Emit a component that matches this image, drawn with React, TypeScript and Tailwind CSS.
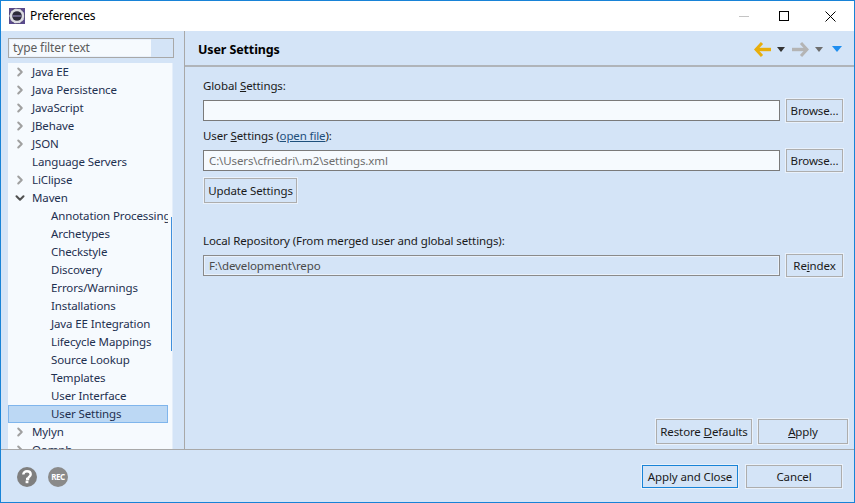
import { ChevronRight, ChevronDown } from "lucide-react";

const TREE = [
  { label: "Java EE", kind: "closed" },
  { label: "Java Persistence", kind: "closed" },
  { label: "JavaScript", kind: "closed" },
  { label: "JBehave", kind: "closed" },
  { label: "JSON", kind: "closed" },
  { label: "Language Servers", kind: "leaf" },
  { label: "LiClipse", kind: "closed" },
  { label: "Maven", kind: "open" },
  { label: "Annotation Processing", kind: "child" },
  { label: "Archetypes", kind: "child" },
  { label: "Checkstyle", kind: "child" },
  { label: "Discovery", kind: "child" },
  { label: "Errors/Warnings", kind: "child" },
  { label: "Installations", kind: "child" },
  { label: "Java EE Integration", kind: "child" },
  { label: "Lifecycle Mappings", kind: "child" },
  { label: "Source Lookup", kind: "child" },
  { label: "Templates", kind: "child" },
  { label: "User Interface", kind: "child" },
  { label: "User Settings", kind: "selected" },
  { label: "Mylyn", kind: "closed" },
  { label: "Oomph", kind: "closed" },
];

function Btn({ className, children }: { className: string; children: React.ReactNode }) {
  return (
    <button
      type="button"
      className={`block text-center border border-[#adadad] shadow-[0_0_0_1px_#e9f1fb] bg-[#d4e4f7] text-[#1a1a1a] ${className}`}
    >
      {children}
    </button>
  );
}

function TreeRow({ label, kind }: { label: string; kind: string }) {
  const pad = kind === "selected" ? "pl-[42px]" : kind === "child" ? "pl-[43px]" : "pl-[24px]";
  return (
    <div
      className={`h-[18px] flex items-center shrink-0 w-[160px] overflow-hidden whitespace-nowrap text-[#1e3050] ${
        kind === "selected" ? "bg-[#bcd8f4] border border-[#7fb5ec]" : ""
      } ${pad}`}
    >
      {kind === "closed" && <ChevronRight className="w-[14px] h-[14px] -ml-[19px] mr-[5px] shrink-0 text-[#a0a0a0]" strokeWidth={3.5} />}
      {kind === "open" && <ChevronDown className="w-[14px] h-[14px] -ml-[19px] mr-[5px] shrink-0 text-[#505050]" strokeWidth={3.5} />}
      {label}
    </div>
  );
}

export default function App() {
  return (
    <div
      className="w-[855px] h-[503px] flex flex-col border border-[#1883d7] bg-[#d4e4f7] text-[11.5px] text-[#1a1a1a] overflow-hidden"
      style={{ fontFamily: '"Noto Sans", sans-serif', letterSpacing: "-0.12px" }}
    >
      {/* title bar */}
      <div className="h-[30px] shrink-0 bg-white flex items-center">
        <svg className="ml-[8px] w-[16px] h-[16px]" viewBox="0 0 16 16">
          <rect width="16" height="16" fill="#5a4a8c" />
          <circle cx="8" cy="8" r="7.6" fill="#dcdce2" strokeDasharray="3 2" stroke="#3a3350" strokeWidth="0.6" />
          <circle cx="8" cy="8" r="4.8" fill="#2c2a3a" />
          <rect x="3.5" y="7.4" width="9" height="1.2" fill="#8f86b8" />
        </svg>
        <span className="ml-[5px] text-[12px] text-black">Preferences</span>
        <div className="ml-auto flex items-center">
          <div className="w-[10px] h-px bg-[#c4c4c4] mr-[30px]" />
          <div className="w-[10px] h-[10px] border border-black mr-[36px]" />
          <svg className="w-[11px] h-[11px] mr-[18px]" viewBox="0 0 11 11">
            <path d="M0.5 0.5L10.5 10.5M10.5 0.5L0.5 10.5" stroke="#000" strokeWidth="1" />
          </svg>
        </div>
      </div>

      <div className="flex-1 min-h-0 flex">
        {/* left pane */}
        <div className="w-[184px] shrink-0 flex flex-col pl-[7px] pt-[7px] border-r border-[#a8a8a8]">
          <div className="w-[166px] h-[20px] shrink-0 border border-[#a8a8a8] bg-[#f6fafe] flex items-center shadow-[inset_0_0_0_1px_#e9f1fb]">
            <span className="pl-[4px] text-[12px] text-[#5c5c5c] w-[142px]">type filter text</span>
            <span className="h-full flex-1 bg-[#d4e4f7]" />
          </div>
          <div className="relative mt-[5px] w-[165px] flex-1 min-h-0 bg-[#f6fafe] border-r border-[#e4eefa] overflow-hidden flex flex-col">
            {TREE.map((r) => (
              <TreeRow key={r.label} label={r.label} kind={r.kind} />
            ))}
            <div className="absolute left-[163px] top-[154px] w-[2px] h-[134px] bg-[#3f8fdc]" />
          </div>
        </div>

        {/* right pane */}
        <div className="flex-1 min-w-0 flex flex-col">
          <div className="h-[36px] shrink-0 flex items-center border-b-2 border-[#b0b4b9] pt-[2px] pl-[13px] pr-[12px]">
            <span className="font-bold text-[12.5px] text-black pt-[3px]">User Settings</span>
            <div className="ml-auto flex items-center">
              <svg className="w-[17px] h-[17px]" viewBox="0 0 17 17">
                <path d="M8 2L2 8.5L8 15" fill="none" stroke="#e8ae0c" strokeWidth="3" />
                <path d="M3 8.5H17" fill="none" stroke="#e8ae0c" strokeWidth="3.4" />
              </svg>
              <svg className="ml-[6px] w-[8px] h-[5px]" viewBox="0 0 8 5"><path d="M0 0H8L4 5Z" fill="#333" /></svg>
              <svg className="ml-[7px] w-[17px] h-[17px]" viewBox="0 0 17 17">
                <path d="M9 2L15 8.5L9 15" fill="none" stroke="#b4b4b4" strokeWidth="3" />
                <path d="M0 8.5H14" fill="none" stroke="#b4b4b4" strokeWidth="3.4" />
              </svg>
              <svg className="ml-[6px] w-[8px] h-[5px]" viewBox="0 0 8 5"><path d="M0 0H8L4 5Z" fill="#6e6e6e" /></svg>
              <svg className="ml-[9px] w-[10px] h-[6px]" viewBox="0 0 10 6"><path d="M0 0H10L5 6Z" fill="#1e8ef0" /></svg>
            </div>
          </div>

          <div className="flex-1 min-h-0 flex flex-col pl-[18px] pr-[6px] pb-[5px]">
            <div className="pr-[5px]">
              <div className="mt-[10px] h-[18px] flex items-center">
                <span>Global <u>S</u>ettings:</span>
              </div>
              <div className="mt-[4px] flex items-center gap-[6px]">
                <div className="flex-1 h-[21px] border border-[#7a7a7a] bg-[#f6fafe]" />
                <Btn className="w-[57px] h-[23px]">Browse...</Btn>
              </div>
              <div className="mt-[5px] h-[18px] flex items-center">
                <span>
                  User <u>S</u>ettings (<u className="text-[#1e4f7c]">open file</u>):
                </span>
              </div>
              <div className="mt-[4px] flex items-center gap-[6px]">
                <div className="flex-1 h-[21px] border border-[#7a7a7a] bg-[#f6fafe] flex items-center pl-[5px] text-[#6d6d6d]">
                  C:\Users\cfriedri\.m2\settings.xml
                </div>
                <Btn className="w-[57px] h-[23px]">Browse...</Btn>
              </div>
              <Btn className="mt-[6px] ml-px w-[93px] h-[25px]">Update Settings</Btn>
              <div className="mt-[29px] h-[18px] flex items-center">
                <span>Local Repository (From merged user and global settings):</span>
              </div>
              <div className="mt-[4px] flex items-center gap-[6px]">
                <div className="flex-1 h-[21px] border border-[#8a8a8a] bg-[#d4e4f7] shadow-[inset_0_0_0_1px_#e9f1fb] flex items-center pl-[5px] text-[#4a4a4a]">
                  F:\development\repo
                </div>
                <Btn className="w-[57px] h-[23px]">Re<u>i</u>ndex</Btn>
              </div>
            </div>
            <div className="mt-auto flex justify-end gap-[6px]">
              <Btn className="w-[96px] h-[25px]">Restore <u>D</u>efaults</Btn>
              <Btn className="w-[90px] h-[25px]"><u>A</u>pply</Btn>
            </div>
          </div>
        </div>
      </div>

      {/* footer */}
      <div className="h-[53px] shrink-0 border-t border-[#a8a8a8] flex items-center pl-[16px] pr-[12px] pt-[1px]">
        <svg className="w-[20px] h-[20px]" viewBox="0 0 20 20">
          <circle cx="10" cy="10" r="10" fill="#7f7f7f" />
          <path d="M6.3 7.6C6.3 5.4 8 4.2 10 4.2C12 4.2 13.7 5.4 13.7 7.3C13.7 9.6 11 9.6 11 12H9" fill="none" stroke="#fff" strokeWidth="2.4" />
          <rect x="8.6" y="13.6" width="2.8" height="2.6" fill="#fff" />
        </svg>
        <div className="ml-[11px] w-[20px] h-[20px] rounded-full bg-[#8a8a8a] flex items-center justify-center text-[8px] font-bold text-white tracking-tighter">
          REC
        </div>
        <div className="ml-auto flex gap-[8px]">
          <button type="button" className="w-[96px] h-[23px] border border-[#1883d7] shadow-[0_0_0_1px_#e9f1fb] bg-[#d4e4f7] text-[#1a1a1a]">
            Apply and Close
          </button>
          <Btn className="w-[96px] h-[23px]">Cancel</Btn>
        </div>
      </div>
    </div>
  );
}
